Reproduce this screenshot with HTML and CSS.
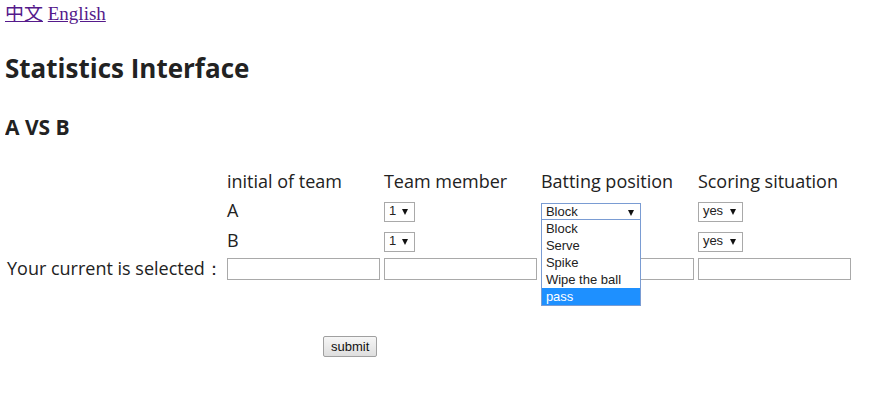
FILE: index.html
```html
<!DOCTYPE html>
<html lang="en">
<head>
<meta charset="utf-8">
<title>Statistics Interface</title>
<link rel="stylesheet" href="styles.css">
</head>
<body>
<div class="lang">
  <a href="#" class="lang-link">中文</a>
  <a href="#" class="lang-link">English</a>
</div>
<h1 class="title">Statistics Interface</h1>
<h2 class="subtitle">A VS B</h2>
<table class="stats">
  <tr>
    <td class="label"></td>
    <td class="cell">initial of team</td>
    <td class="cell">Team member</td>
    <td class="cell">Batting position</td>
    <td class="cell">Scoring situation</td>
  </tr>
  <tr>
    <td class="label"></td>
    <td class="cell">A</td>
    <td class="cell"><span class="sel sel-num">1</span></td>
    <td class="cell">
      <span class="pos-wrap">
        <span class="sel sel-pos sel-open">Block</span>
        <span class="menu">
          <span class="opt">Block</span>
          <span class="opt">Serve</span>
          <span class="opt">Spike</span>
          <span class="opt">Wipe the ball</span>
          <span class="opt opt-hl">pass</span>
        </span>
      </span>
    </td>
    <td class="cell"><span class="sel sel-yes">yes</span></td>
  </tr>
  <tr>
    <td class="label"></td>
    <td class="cell">B</td>
    <td class="cell"><span class="sel sel-num">1</span></td>
    <td class="cell"><span class="sel sel-pos">Block</span></td>
    <td class="cell"><span class="sel sel-yes">yes</span></td>
  </tr>
  <tr>
    <td class="label">Your current is selected：</td>
    <td class="cell"><input class="field" type="text"></td>
    <td class="cell"><input class="field" type="text"></td>
    <td class="cell"><input class="field" type="text"></td>
    <td class="cell"><input class="field" type="text"></td>
  </tr>
</table>
<div class="actions">
  <button class="submit" type="button">submit</button>
</div>
</body>
</html>
```
FILE: styles.css
```css
body {
  margin: 5px;
  font-family: "Open Sans", "Noto Sans", sans-serif;
  color: #222;
  background: #fff;
}
.lang {
  font-family: "Liberation Serif", "Noto Sans CJK SC", serif;
  font-size: 19px;
  line-height: 17px;
}
.lang-link {
  color: #551a8b;
}
.title {
  font-size: 26px;
  font-weight: 700;
  margin: 29px 0 0 0;
  line-height: 34px;
}
.subtitle {
  font-size: 21px;
  font-weight: 700;
  margin: 28px 0 0 0;
  line-height: 28px;
}
.stats {
  border-spacing: 2px;
  margin: 24px 0 0 -1px;
  font-size: 18px;
}
.stats td {
  padding: 1px;
  height: 25px;
  vertical-align: middle;
  white-space: nowrap;
}
.label {
  width: 213px;
}
.cell {
  width: 153px;
}
.field {
  box-sizing: border-box;
  width: 153px;
  height: 22px;
  border: 1px solid #a9a9a9;
  padding: 1px 2px;
  margin: 0;
  display: block;
  font: 13px Arial, "Liberation Sans", sans-serif;
}
.sel {
  box-sizing: border-box;
  display: inline-block;
  position: relative;
  height: 20px;
  line-height: 18px;
  border: 1px solid #a9a9a9;
  background: #fff;
  font: 13px "Liberation Sans", Arial, sans-serif;
  color: #222;
  padding: 0 20px 0 4px;
  vertical-align: middle;
}
.sel::after {
  content: "";
  position: absolute;
  right: 6px;
  top: 6px;
  border-left: 3.5px solid transparent;
  border-right: 3.5px solid transparent;
  border-top: 6px solid #111;
}
.sel-num {
  width: 31px;
}
.sel-yes {
  width: 45px;
}
.sel-pos {
  width: 100px;
}
.sel-open {
  border-color: #7a9cd3;
}
.pos-wrap {
  position: relative;
  display: inline-block;
  vertical-align: middle;
}
.menu {
  position: absolute;
  left: 0;
  top: 20px;
  width: 100px;
  box-sizing: border-box;
  border: 1px solid #7a9cd3;
  background: #fff;
  z-index: 2;
  display: flex;
  flex-direction: column;
  font: 13px "Liberation Sans", Arial, sans-serif;
  color: #222;
}
.opt {
  padding: 0 4px;
  height: 17px;
  line-height: 17px;
}
.opt-hl {
  background: #1e90ff;
  color: #fff;
}
.actions {
  padding: 50px 0 0 318px;
}
.submit {
  font: 13px "Liberation Sans", Arial, sans-serif;
  height: 21px;
  padding: 1px 7px;
  border: 1px solid #a0a0a0;
  border-radius: 2px;
  background: linear-gradient(#f6f6f6, #dedede);
  color: #111;
}
```
